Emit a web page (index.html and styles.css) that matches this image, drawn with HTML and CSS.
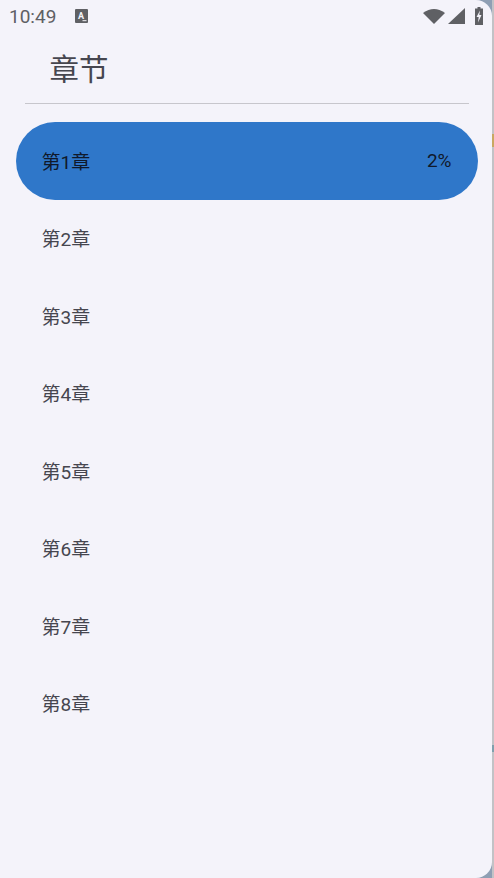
FILE: index.html
```html
<!DOCTYPE html>
<html lang="zh-CN">

<head>
    <meta charset="UTF-8">
    <title>章节</title>
    <link rel="stylesheet" href="styles.css">
</head>

<body>
    <div class="drawer">
        <div class="status">
            <span class="time">10:49</span>
            <svg class="note-icon" width="13" height="14" viewBox="0 0 13 14">
                <rect width="13" height="14" rx="1" fill="#5f6064" />
                <text x="6" y="9.500" class="note-letter">A</text>
                <rect x="7.500" y="11" width="4" height="1.200" fill="#d8d8dc" />
            </svg>
            <span class="status-right">
                <svg class="wifi" width="22" height="16" viewBox="0 0 22 16">
                    <path d="M0 5 Q11 -3 22 5 L11 16 Z" fill="#5f6064" />
                </svg>
                <svg class="signal" width="17" height="16" viewBox="0 0 17 16">
                    <path d="M0 16 L17 0 V16 Z" fill="#5f6064" />
                </svg>
                <svg class="battery" width="8" height="18" viewBox="0 0 8 18">
                    <path d="M2.500 0 H5.500 V1.500 H8 V18 H0 V1.500 H2.500 Z" fill="#5f6064" />
                    <path d="M5 3.500 L1.500 10 H3.700 L3 15.500 L6.500 8 H4.300 Z" fill="#f4f3fa" />
                </svg>
            </span>
        </div>

        <h1 class="title">章节</h1>
        <div class="divider"></div>

        <ul class="chapters">
            <li class="active"><span>第1章</span><span class="progress">2%</span></li>
            <li><span>第2章</span></li>
            <li><span>第3章</span></li>
            <li><span>第4章</span></li>
            <li><span>第5章</span></li>
            <li><span>第6章</span></li>
            <li><span>第7章</span></li>
            <li><span>第8章</span></li>
        </ul>
    </div>
    <div class="edge"></div>
</body>

</html>
```

FILE: styles.css
```css
* {
    margin: 0;
    padding: 0;
    box-sizing: border-box;
}

html,
body {
    height: 100%;
    overflow: hidden;
}

body {
    background: #8f9fb4;
    font-family: Roboto, "Noto Sans CJK SC", sans-serif;
    display: flex;
}

.drawer {
    width: 492px;
    height: 878px;
    background: #f4f3fa;
    border-radius: 0 16px 16px 0;
    flex: none;
}

/* what shows of the page behind the drawer */
.edge {
    width: 2px;
    height: 878px;
    flex: none;
    background: linear-gradient(#c2c2c6 0 134px, #c9a862 134px 147px, #c2c2c6 147px 745px, #7fa0ad 745px 752px, #c2c2c6 752px);
}

.status {
    height: 34px;
    padding-left: 9px;
    display: flex;
    align-items: flex-start;
    color: #5f6064;
}

.time {
    font-size: 19px;
    line-height: 24px;
    margin-top: 5px;
}

.note-icon {
    margin: 9px 0 0 19px;
}

.note-letter {
    font-size: 9px;
    font-weight: 700;
    fill: #f4f3fa;
    text-anchor: middle;
}

.status-right {
    margin: 7px 9px 0 auto;
    display: flex;
    align-items: flex-start;
}

.wifi {
    margin-top: 1px;
}

.signal {
    margin: 1px 10px 0 3px;
}

.title {
    font-size: 29.500px;
    font-weight: 400;
    line-height: 40px;
    margin: 15.500px 0 0 49.500px;
    color: #46464f;
}

.divider {
    height: 1px;
    margin: 13.500px 23px 0 25px;
    background: #c7c6cc;
}

.chapters {
    list-style: none;
    margin: 18px 14.500px 0 16px;
}

.chapters li {
    height: 77.500px;
    padding: 0 26px 1px 25.500px;
    display: flex;
    align-items: center;
    justify-content: space-between;
    font-size: 19px;
    color: #46464f;
    border-radius: 39px;
}

.chapters li.active {
    background: #2f77c9;
    color: #10192b;
}
```
